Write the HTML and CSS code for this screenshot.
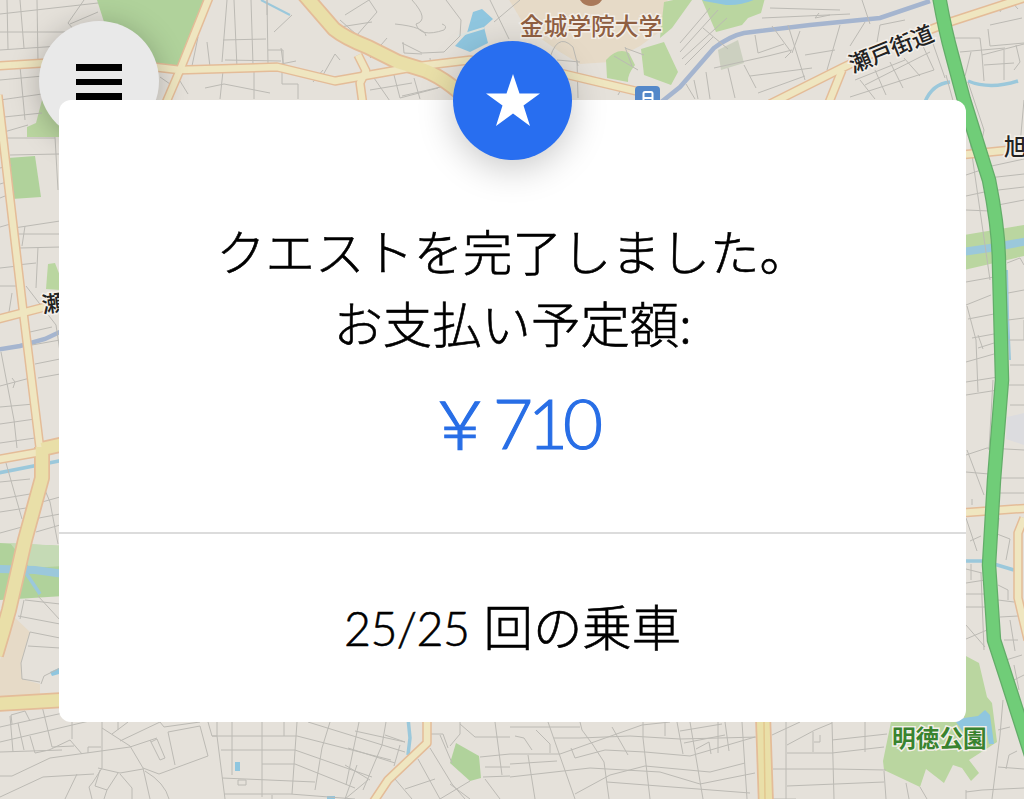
FILE: index.html
```html
<!DOCTYPE html>
<html lang="ja">
<head>
    <meta charset="UTF-8">
    <meta name="viewport" content="width=device-width, initial-scale=1.0">
    <title>クエスト完了</title>
    <link rel="stylesheet" href="styles.css">
</head>
<body>

<div class="screen">
    <!-- Map background -->
    <svg class="map" viewBox="0 0 1024 799" preserveAspectRatio="none" aria-hidden="true">
        <defs>
            <g id="roads-wide">
                <path d="M302 -8 L334 29 Q345 38 368 47 L398 62 L424 70 Q450 80 480 112"/>
                <path d="M42 447 L42 478 L25 540 L9 610 Q3 632 -4 655"/>
                <path d="M42 449 L64 444"/>
                <path d="M-5 704 L64 700"/>
                <path d="M763 715 L766 805"/>
            </g>
            <g id="roads">
                <path d="M-5 66 L45 63 L120 63 L180 70 L277 67 L335 81 L420 66 L470 60 L560 73 L640 92"/>
                <path d="M210 -5 L180 70 L165 105"/>
                <path d="M-2 95 L9 190 L23 310 L40 449"/>
                <path d="M-5 320 L45 307"/>
                <path d="M-5 460 L40 452"/>
                <path d="M358 55 L366 71 L360 83 L363 105"/>
                <path d="M770 104 L842 68 L890 45 L950 22 L1030 -4"/>
                <path d="M842 70 L828 105"/>
                <path d="M960 155 L1010 150"/>
                <path d="M960 513 L1030 508"/>
                <path d="M1024 518 L1018 533 L1018 598 L1028 640"/>
                <path d="M427 715 L427 743 L388 780 L372 804"/>
            </g>
        </defs>

        <!-- Land use -->
        <path class="campus" d="M508 -2 L526 28 L560 52 L580 64 L610 62 L640 46 L662 30 L668 -2 Z"/>
        <path class="campus" d="M13 616 L30 632 L21 663 L22 679 L40 684 L40 700 L0 703 V660 Z"/>
        <g class="park">
            <path d="M97 0 H206 L180 66 L150 62 L105 25 Z"/>
            <path d="M8 158 L35 156 L41 197 L12 199 Z"/>
            <path d="M0 543 L64 546 V596 L0 600 Z"/>
            <path d="M456 743 L479 756 L481 778 L470 781 L450 763 Z"/>
        </g>
        <g class="grass">
            <path d="M42 100 L64 117 V137 L27 137 L27 127 L36 123 Z"/>
            <path d="M48 264 L55 263 L60 276 L60 290 L46 289 Z"/>
            <path d="M606 60 Q618 47 629 53 L635 65 Q627 75 628 82 L607 78 Z"/>
            <path d="M641 49 L664 42 L678 72 L671 85 L644 75 Z"/>
            <path d="M664 2 L678 -1 L692 0 L672 28 L660 38 Z"/>
            <path d="M701 -2 H765 L761 13 L748 18 L742 25 L716 32 Z"/>
            <path d="M964 235 L1024 225 V256 L964 270 Z"/>
            <path d="M964 655 L979 663 L987 697 L992 703 L997 742 L969 760 L979 773 L971 781 L962 768 L953 765 L944 783 L926 769 L920 787 L884 770 L883 761 L891 722 L964 722 Z"/>
        </g>
        <path class="plot" d="M718 50 L738 40 L744 63 L721 70 Z"/>
        <path class="plot-blue" d="M1007 417 L1024 413 V445 L1006 439 Z"/>
        <path class="grass-light" d="M10 543 L64 546 V566 L30 568 Z"/>

        <!-- Water -->
        <g class="water">
            <path d="M473 12 L482 9 L493 19 L484 27 L488 43 L470 52 L455 46 L467 33 Z"/>
            <path d="M700 -2 H758 Q742 6 726 5 L704 1 Z"/>
            <path d="M956 722 L964 718 L978 716 L985 710 L990 715 L994 744 L989 744 L986 729 L964 733 Z"/>
            <path d="M235 762 h5 v9 h-5 Z"/>
            <path d="M50 672 l9 -4 v6 l-7 2 Z"/>
            <path d="M327 796 h8 v3 h-8 Z"/>
        </g>
        <path class="pond-path" d="M458 36 L484 28"/>
        <g class="river">
            <path class="river-wide" d="M-2 569 L35 570 L64 574"/>
            <path d="M24 570 L40 594"/>
            <path d="M-2 473 L64 460"/>
            <path class="river-wide" d="M962 252 L990 248 L1028 241"/>
            <path d="M925 102 Q932 84 950 82 M968 81 Q990 90 1018 81 M962 561 L984 561 L1014 570"/>
            <path d="M408 718 L410 738 L408 755"/>
            <path class="river-thin" d="M261 0 L290 15 M1007 270 L1008 315 L1010 360"/>
        </g>
        <g class="stream">
            <path d="M650 111 L680 87 L714 48 Q730 36 744 33 L810 25 L880 18 L930 1"/>
            <path d="M-4 350 L20 346 L45 339 L64 330"/>
        </g>

        <!-- Small streets -->
        <g class="streets">
            <path d="M0 14 L98 3 M0 32 L66 32 M0 50 L60 46 M7 0 L8 49 M20 0 L24 48 M37 0 L38 62 M84 0 L68 23 L75 31 M70 24 L98 12"/>
            <path d="M0 80 L43 76 M0 100 L42 94 M4 117 L42 113 M4 132 L28 125 M4 138 L55 138 M10 155 L59 154 M20 66 L25 120 M55 137 L58 190"/>
            <path d="M198 37 L192 66 M207 42 L210 67 M227 0 L222 62 M251 0 L253 65 M267 0 L268 65 M223 40 L266 39 M234 0 L237 68 M268 50 H283 V67 M281 48 L284 69 M225 60 L281 61 M281 64 L296 61 M274 32 L292 15 M319 82 L335 54 L340 60 M313 82 L323 70 M267 0 L267 15 M180 81 L188 94"/>
            <path d="M205 88 L224 84 L270 93 M223 71 L220 99 M254 69 V99 M282 71 V84 H298 V99 M160 77 L170 84"/>
            <path d="M340 27 L372 22 M345 15 L369 0 L377 12 L357 35 M357 35 L340 20 M387 38 L370 58 M412 0 Q430 20 416 24 Q420 38 444 30 Q448 26 442 24 M446 0 L461 20 L460 36 L444 52 L422 53 L402 43 M403 42 L404 53 L422 54 M395 24 Q425 27 426 36 M430 58 L431 69 M490 0 L509 39 M494 22 L520 0"/>
            <path d="M370 90 L412 83 M374 78 L392 104 M394 75 L400 98 L438 88 M402 96 L445 86 M414 78 L420 99"/>
            <path d="M548 65 Q556 30 573 47 L578 66 M625 47 L632 66 M625 48 L644 55 M614 56 L638 70 M557 60 L580 62 M577 60 L578 98 M618 95 L624 84"/>
            <path d="M680 43 L710 8 M680 52 L718 10 M682 59 L727 18 M685 65 L713 37 M703 28 L728 49 M686 84 L695 99 M694 80 L698 99 M706 72 L710 99 M714 68 L768 56 L792 50 M728 68 L735 98 M744 65 L756 88 M755 35 L758 53 L784 44 M772 26 L791 52 L785 58 M788 25 L805 80 M770 8 L840 10 M762 18 L850 14 M819 13 L815 18 L830 15 M840 25 L827 70 M862 0 L870 24 M865 22 L850 46 M800 31 L792 53 M805 55 L835 50 M750 76 L812 68 M758 93 L805 76 M855 80 L905 60 M865 85 L930 52 M860 80 L875 99 M875 70 L886 95 M890 62 L903 88 M904 58 L920 76 M922 44 L934 70 M850 97 L934 70 M877 42 L880 25 L905 20 M930 35 L945 78"/>
            <path d="M955 38 H980 L982 55 L1024 44 M960 52 L1005 48 M990 25 L1022 18 M988 29 L990 46 L1024 43 M971 52 L965 76 M982 55 L984 81 M984 65 L1014 63 M1004 50 V80 M1016 45 L1020 62 L1014 70 M946 75 L958 119 M968 82 L984 130 L981 145 M1024 100 L1020 145 M1000 12 L1006 0 M1010 0 L1018 9"/>
            <path d="M0 168 L12 165 M0 184 L13 180 M0 198 L15 192 M14 228 L60 221 M18 234 L60 234 M20 248 L60 247 M25 226 L22 246 M38 247 L36 288 M17 265 L36 263 M0 227 L14 223 M0 268 L18 266 M0 286 L20 286 M9 312 L12 293 M26 286 L56 325 L60 352 M30 332 L52 327 M32 345 L60 340 M35 364 L60 359 M38 378 L60 374 M0 386 L30 378 M0 407 L34 404 M1 352 L14 420 L17 448 M0 424 L35 419 M0 443 L35 438 M12 378 L15 382 L13 388"/>
            <path d="M6 463 L22 519 M0 482 L30 479 M0 499 L30 494 M0 512 L26 508 M0 533 L22 527 M42 483 L50 502 L58 544 M42 502 L60 497 M39 518 L60 514 M36 532 L60 525 M24 600 L20 619 M25 600 L60 604 M18 616 L60 624 M38 596 L60 620 M30 632 L60 638 M28 646 L60 648 M30 632 L21 663 L22 679 L40 682 M41 684 L44 676 L60 668"/>
            <path d="M966 175 L984 169 M966 196 L989 191 M987 167 L1024 159 M988 178 L1024 174 M990 191 L1024 187 M998 205 L1024 200 M966 210 L990 211 M970 141 L990 280 M1007 263 L1020 258 L1024 265 M966 305 L991 295 M967 306 L976 340 L978 392 M966 282 L994 277 M968 319 L994 314 M972 338 L994 334 M978 335 L983 349 M966 362 L994 354 M978 348 L994 343 M966 382 L998 377 M966 395 L998 390 M1008 293 L1024 290 M1008 320 L1024 318 M1009 340 H1024 M1010 365 H1024 M1009 385 H1024 M1010 405 H1024 M993 380 L989 450 M966 455 L987 448 L1024 450 M1024 320 V340"/>
            <path d="M967 450 L984 495 M966 472 L989 474 M1000 478 H1024 M999 493 H1024 M972 499 V505 M966 518 L977 551 M970 541 L981 536 M999 518 L997 534 L1010 539 L1006 560 M966 569 L982 573 M966 583 L985 580 M966 594 H986 M966 607 H986 M966 625 L985 647 M966 639 L987 630 M971 564 V580 M981 573 L984 650 M998 585 L1008 590 V600 M998 600 L1014 602 M1000 617 L1018 616 M1004 640 L1018 640 M1010 620 L1015 651 M1006 660 L1022 655 M1014 665 L1019 690 M1014 680 L1024 675 M1003 700 L1000 735 L992 799 M998 730 L1010 727 M1006 769 L1009 755 L1017 751 M998 767 L1024 769 M966 792 L982 790 L1024 788 M966 790 V799"/>
            <path d="M0 727 L72 711 M0 742 L102 718 M0 752 L62 750 M12 724 L11 715 L25 711 L30 721 M10 716 L13 752 M18 723 L24 750 M30 736 L35 753 L49 750 L70 740 L82 754 M42 706 L52 747 L74 746 M72 720 V739 M88 753 V747 H101 M0 776 H12 L50 758 L130 747 L157 738 M0 797 L43 777 L94 774 M102 721 V768 L93 782 M102 728 L130 746 L143 768 L159 774 L208 756 L200 726 L168 732 L175 765 M77 774 L65 799 M98 768 L120 773 L143 769 M118 721 V730 M120 741 L160 722 M112 734 L128 722 M150 740 L160 760 L165 758 L157 739 L151 742 M160 722 L164 727 L200 722 M93 782 L89 787 L92 799 M100 770 L95 786 L107 790 L104 799 M118 773 L107 790 M120 774 L132 788 V799 M143 768 L150 799 M145 771 Q165 783 169 799"/>
            <path d="M208 722 L212 736 L217 736 L225 799 M217 722 V736 M212 736 H297 L391 760 M221 750 H295 L372 777 M232 722 V775 M262 722 V797 M284 722 V736 M297 722 L294 765 L292 794 M262 764 H295 L355 788 M222 778 L315 782 M224 794 L290 794 L355 799 M238 780 h8 v5 h-8 Z M272 795 V799 M308 722 L350 735 L405 752 M330 722 L322 748 L315 790 M359 722 L346 785 M386 722 L382 745 L363 790 M355 731 L405 742 M348 748 L395 763 M345 765 L370 780 M400 745 L394 766 M357 765 L345 799 M368 780 L345 799 M385 735 L405 742 M418 759 L440 799 M430 748 L452 784 L465 799 M440 735 L452 763 M450 784 L470 799 M430 734 H443 L448 748 M460 722 V734 L450 746 M460 724 L475 737 L510 737 M480 757 L510 754 M483 777 L510 776 M485 767 H510 M495 722 L502 775 M485 779 L500 799 M405 789 L435 779 M395 779 L412 799 M470 781 L440 799"/>
            <path d="M510 754 L560 754 L642 725 L670 722 M510 764 L557 761 M510 777 L590 768 L660 772 L700 784 L755 773 M528 755 L535 799 M548 722 L575 799 M580 722 L582 730 L593 745 L604 762 L609 799 M554 738 L580 738 L630 736 L680 739 L758 737 M571 748 L575 758 L605 750 L645 752 L690 756 L755 737 M575 794 L610 775 L645 766 L710 772 L745 763 M515 736 L524 738 L532 750 M536 730 L550 744 V753 M510 727 L530 727 L580 727 M612 727 L628 755 M643 722 V738 L650 799 M665 722 V736 M677 722 L683 754 M690 722 L703 799 M680 731 L722 724 M684 743 L725 735 M718 722 V753 M725 722 L729 751 M696 749 L709 742 L711 754 M742 722 L747 799 M607 782 L750 793"/>
            <path d="M772 735 L800 722 M787 745 L815 730 L832 723 M786 722 V799 M832 722 L834 799 M865 722 V752 M813 732 V752 M820 735 V742 H814 M787 753 H832 L884 747 M773 769 L834 769 L886 770 M787 786 L884 782 M832 740 L887 734 M772 799 H796 M884 771 L886 799 M906 783 L909 799 M920 787 L927 799"/>
        </g>

        <!-- Main roads -->
        <use class="casing" href="#roads"/>
        <use class="casing casing-wide" href="#roads-wide"/>
        <use class="surface" href="#roads"/>
        <use class="surface surface-wide" href="#roads-wide"/>
        <path class="median" d="M764 722 L765 799"/>
        <path class="highway-edge" d="M939 -4 Q945 30 952 55 L964 100 L978 145 L989 180 Q999 230 999 265 L1002 380 L994 480 L989 565 L994 640 L1007 680 L1031 755"/>
        <path class="highway" d="M939 -4 Q945 30 952 55 L964 100 L978 145 L989 180 Q999 230 999 265 L1002 380 L994 480 L989 565 L994 640 L1007 680 L1031 755"/>

        <!-- Labels and pins -->
        <circle class="pin" cx="591" cy="-7" r="13"/>
        <g class="station">
            <rect x="635" y="86" width="25" height="26" rx="4"/>
            <rect class="train" x="643.5" y="92" width="9" height="17" rx="1.5"/>
            <path class="train" d="M644 98 H652"/>
        </g>
        <text class="label label-school" x="520" y="35">金城学院大学</text>
        <text class="label label-road" transform="translate(853 73) rotate(-22)">瀬戸街道</text>
        <text class="label label-road" transform="translate(43 313) rotate(-8)">瀬</text>
        <text class="label label-road" x="1004" y="155">旭</text>
        <text class="label label-park" x="892" y="747">明徳公園</text>
    </svg>

    <button class="menu-btn" aria-label="メニュー">
        <span></span>
        <span></span>
        <span></span>
    </button>

    <!-- Quest card -->
    <div class="quest-card">
        <div class="quest-badge">
            <svg viewBox="0 0 54 52" width="54" height="52">
                <path d="M27 0 L33.5 19.5 H54 L37.5 31.5 L44 52 L27 39.5 L10 52 L16.5 31.5 L0 19.5 H20.5 Z"/>
            </svg>
        </div>
        <div class="quest-summary">
            <p class="quest-message">クエストを完了しました。<br>お支払い予定額:</p>
            <p class="quest-amount"><span class="yen">&#xFFE5;</span><span class="num">710</span></p>
        </div>
        <div class="quest-progress"><span class="count">25/25</span> 回の乗車</div>
    </div>
</div>

</body>
</html>
```

FILE: styles.css
```css
body {
    margin: 0;
    font-family: 'Noto Sans CJK JP', sans-serif;
    color: #000;
    overflow: hidden;
}

.screen {
    position: relative;
    width: 1024px;
    height: 799px;
    box-sizing: border-box;
    padding: 100px 58px 77px 59px;
    overflow: hidden;
    background-color: #e5e1da;
}

/* Map */
.map {
    position: absolute;
    top: 0;
    left: 0;
    width: 100%;
    height: 100%;
}

.campus { fill: #e6dac7; }
.park { fill: #b0d29b; }
.grass { fill: #bad6a0; }
.grass-light { fill: #c5dab5; }
.plot { fill: #ccd0c0; }
.plot-blue { fill: #dcdcdf; }
.water { fill: #8fc6df; }
.pond-path { fill: none; stroke: #dce3df; stroke-width: 2; }

.river {
    fill: none;
    stroke: #9bc8db;
    stroke-width: 3.5;
}

.river-wide { stroke-width: 8; }
.river-thin { stroke-width: 2; }

.stream {
    fill: none;
    stroke: #a5b5cf;
    stroke-width: 4.5;
}

.streets {
    fill: none;
    stroke: #bcbab4;
    stroke-width: 1;
}

.casing {
    fill: none;
    stroke: #e4bc98;
    stroke-width: 9.5;
    stroke-linejoin: round;
}

.surface {
    fill: none;
    stroke: #efe6c0;
    stroke-width: 6.5;
    stroke-linejoin: round;
}

.casing-wide { stroke-width: 16; }
.surface-wide { stroke: #e9dfa8; stroke-width: 12.5; }
.median { stroke: #e3c78f; stroke-width: 1.5; }

.highway-edge {
    fill: none;
    stroke: #63ad69;
    stroke-width: 14.5;
}

.highway {
    fill: none;
    stroke: #70cd78;
    stroke-width: 12;
}

.pin { fill: #a9795a; }
.station { fill: #5488c9; }
.train { fill: none; stroke: #fff; stroke-width: 2; }

.label {
    font-family: 'Noto Sans CJK JP', sans-serif;
    font-size: 23.7px;
    font-weight: 500;
    stroke: #f3efe9;
    stroke-width: 3px;
    paint-order: stroke;
}

.label-school { fill: #8f5f42; }
.label-road { fill: #222; font-size: 22.3px; }
.label-park { fill: #39832f; font-weight: 700; }

/* Menu button */
.menu-btn {
    position: absolute;
    top: 21px;
    left: 39px;
    width: 120px;
    height: 120px;
    box-sizing: border-box;
    padding: 43px 37px 0;
    display: flex;
    flex-direction: column;
    gap: 8px;
    border: none;
    border-radius: 50%;
    background-color: #e9e9e9;
    box-shadow: 0 4px 30px rgba(0, 0, 0, 0.25);
}

.menu-btn span {
    width: 46px;
    height: 6.5px;
    flex: none;
    background-color: #000;
}

/* Quest card */
.quest-card {
    position: relative;
    height: 622px;
    display: flex;
    flex-direction: column;
    background-color: #fff;
    border-radius: 12px;
}

.quest-badge {
    position: absolute;
    top: -59px;
    left: 394px;
    width: 119px;
    height: 119px;
    box-sizing: border-box;
    padding-bottom: 2px;
    display: flex;
    align-items: center;
    justify-content: center;
    border-radius: 50%;
    background-color: #286ef0;
    box-shadow: 0 8px 36px rgba(0, 0, 0, 0.22);
}

.quest-badge svg {
    fill: #fff;
}

.quest-summary {
    height: 434px;
    box-sizing: border-box;
    padding-top: 114px;
    border-bottom: 2px solid #dcdcdc;
    text-align: center;
}

.quest-message {
    margin: 0;
    font-size: 49.4px;
    font-weight: 300;
    line-height: 72px;
    -webkit-text-stroke: 0.6px #000;
}

.quest-amount {
    margin: 12px 0 0;
    display: flex;
    justify-content: center;
    align-items: baseline;
    color: #286ee6;
    line-height: 100px;
    -webkit-text-stroke: 1.2px #286ee6;
}

.quest-amount .yen {
    font-size: 66px;
    font-weight: 300;
}

.quest-amount .num {
    font-family: Lato, sans-serif;
    font-size: 69px;
    font-weight: 300;
    letter-spacing: -5px;
}

.quest-progress {
    flex: 1;
    display: flex;
    justify-content: center;
    align-items: baseline;
    gap: 14px;
    padding-top: 55px;
    font-size: 49.4px;
    font-weight: 300;
    line-height: 72px;
    -webkit-text-stroke: 0.6px #000;
}

.quest-progress .count {
    font-family: Lato, sans-serif;
    font-size: 46.5px;
    letter-spacing: -0.5px;
}
```
